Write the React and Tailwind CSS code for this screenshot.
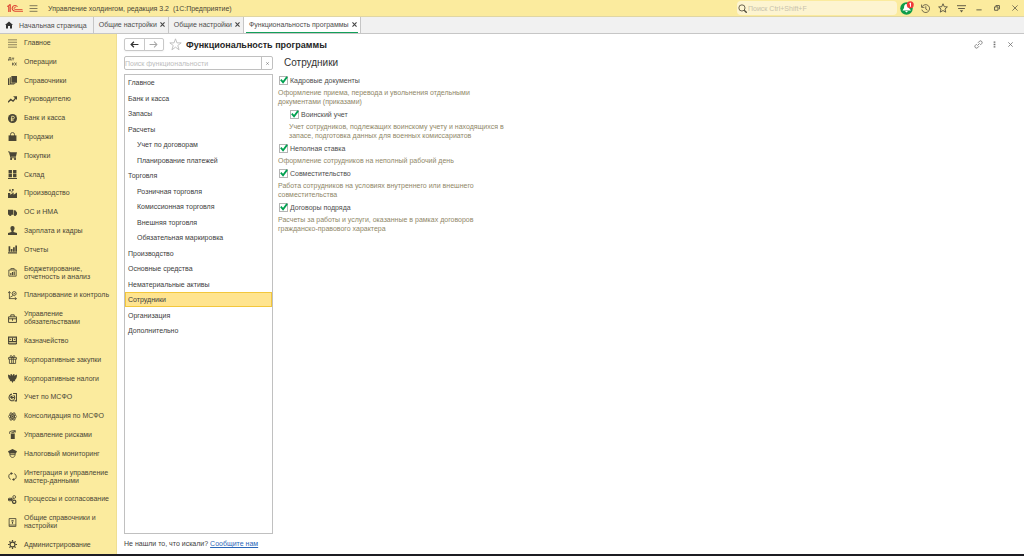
import React, { useState } from 'react';

const Icon = ({ children, className = 'w-[10px] h-[10px]' }) => (
  <svg
    viewBox="0 0 16 16"
    className={`${className} shrink-0`}
    fill="none"
    stroke="currentColor"
    strokeWidth="1.5"
    aria-hidden="true"
  >
    {children}
  </svg>
);

// filled and stroked parts of the section icons
const F = (props) => <path fill="currentColor" stroke="none" {...props} />;
const S = (props) => <path {...props} />;

const icons = {
  lines: <S strokeWidth="1.1" d="M0 1.500h16M0 5.800h16M0 10.200h16M0 14.500h16" />,
  operations: (
    <S strokeWidth="1.3" d="M1 6V5l1-1V1h3v4M0 6V5h6v1M7 2h4M9 2v4M8 10v5M11 10l-2.500 2.500L11 15M12 10l3 5M15 10l-3 5" />
  ),
  books: (
    <>
      <F d="M6 0h10v12H6z" />
      <F d="M3 2h2v11h8v1H3z" />
      <F d="M0 4h2v11h9v1H0z" />
    </>
  ),
  trend: (
    <>
      <S strokeWidth="2.4" d="M0 13l5-5 4 3 5-6" />
      <F d="M9 2h7v7z" />
    </>
  ),
  ruble: (
    <>
      <circle cx="8" cy="8" r="8" fill="currentColor" stroke="none" />
      <S stroke="#fbeb9e" d="M6.500 13V4h2.500a2.300 2.300 0 0 1 0 4.700H5M5 11h5" />
    </>
  ),
  bag: (
    <>
      <F d="M1 6h14v10H1z" />
      <S d="M4.500 8V4a3.500 3 0 0 1 7 0v4" />
    </>
  ),
  cart: (
    <>
      <F d="M2 2h14l-2 8H4z" />
      <S d="M0 1.500h3l2 10.500H14" />
      <F d="M4 12h3v4H4zM11 12h3v4h-3z" />
    </>
  ),
  warehouse: <F d="M1 0h6v6H1zM9 0h6v6H9zM1 7h6v6H1zM9 7h6v6H9zM0 14h16v2H0z" />,
  factory: <F d="M0 16V7h4v3l6-4v4l6-4v10zM2 1h3v3H2zM7 0h3v3H7zM6 4h2v2H6z" />,
  truck: (
    <>
      <F d="M0 3h9v9H0zM10 4h3l3 4v4h-6z" />
      <circle cx="4" cy="12" r="2.300" fill="currentColor" stroke="none" />
      <circle cx="12.500" cy="12" r="2.300" fill="currentColor" stroke="none" />
    </>
  ),
  person: <F d="M8 0a3.700 3.700 0 0 1 3.700 4c0 2-1 4-2 5l.3 1.500 6 2V16H0v-3.500l6-2 .3-1.500c-1-1-2-3-2-5A3.700 3.700 0 0 1 8 0z" />,
  bars: <F d="M1 2h3v10H1zM5 7h3v5H5zM9 4h3v8H9zM13 1h3v11h-3zM0 13h16v2H0z" />,
  budget: (
    <>
      <S d="M1.500 3.500h13v11h-13zM5 3V1h6v2" />
      <F d="M4 9h2v4H4zM7 7h2v6H7zM10 6h2v7h-2z" />
    </>
  ),
  planning: (
    <>
      <S d="M2.500 1v13M0 4l2.500-3L5 4M2 13.500h13M12 11l3 2.500-3 2.500M4 11l5-3" />
      <circle cx="11" cy="4.500" r="3.500" />
      <S d="M9.500 4.500l1.200 1.200L13 3" />
    </>
  ),
  briefcase: <S strokeWidth="1.7" d="M1 5h14v10H1zM5 5V1.500h6V5M1 8.500h14M8 8v4" />,
  treasury: (
    <>
      <S d="M1 2h14v8H1zM1 14h14" strokeWidth="2" />
      <F d="M3 4l3 2-3 2zM13 4l-3 2 3 2zM7 3h2v6H7zM0 11h2v3H0zM14 11h2v3h-2z" />
    </>
  ),
  gift: <S d="M1 4.500h14v3H1zM2.500 7.500v7.500h11V7.500M6.500 4v11M9.500 4v11M8 4C5 4 3 3 4 1.500S8 2 8 4c0-2 3-4 4-2.500S11 4 8 4" />,
  eagle: (
    <F d="M8 3L6.500 0 4 1l1 2-5-2c0 5 1 9 4 9.500L3 13l3-.5L8 16l2-3.500 3 .5-1-2.500c3-.5 4-4.500 4-9.500l-5 2 1-2-2.500-1z" />
  ),
  ifrs: (
    <>
      <S strokeWidth="1.800" d="M7 2a6 6 0 1 0 4 11M9 1h6v13h-3M10 4a5 5 0 0 1 0 8" />
      <F d="M3 7l5-3v3h3v2H8v3z" />
    </>
  ),
  atom: (
    <>
      <ellipse cx="8" cy="8" rx="7.500" ry="3" />
      <ellipse cx="8" cy="8" rx="7.500" ry="3" transform="rotate(60 8 8)" />
      <ellipse cx="8" cy="8" rx="7.500" ry="3" transform="rotate(120 8 8)" />
      <circle cx="8" cy="8" r="1.800" fill="currentColor" stroke="none" />
    </>
  ),
  extinguisher: (
    <>
      <F d="M5 6h7v10H5zM6 3h5v2H6z" />
      <S d="M3 7V3l4-1.500h5M10 2l3-1v3z" />
    </>
  ),
  inspector: (
    <>
      <F d="M0 4l8-4 8 4-2 4H2z" />
      <S d="M3.500 7v3c0 3 2 5 4.500 5s4.500-2 4.500-5V7M3 10h10" />
    </>
  ),
  sync: (
    <>
      <S strokeWidth="1.600" d="M6 2.500C2 3 1 6 1.500 9c.3 2 1.500 3.500 3.500 4M10 13.500c4-.5 5-3.500 4.500-6.500-.3-2-1.500-3.500-3.500-4" />
      <F d="M5 0l4 2.500L5 5.500zM11 10.500v5.500l-4-2.500z" />
    </>
  ),
  process: (
    <>
      <circle cx="11" cy="3.500" r="2.500" />
      <circle cx="11" cy="12" r="3" strokeWidth="2.200" />
      <S strokeWidth="1.800" d="M0 8h6M3 5L0 8l3 3M7 8l3-2" />
      <F d="M4 5h3v6H4z" />
    </>
  ),
  cabinet: (
    <>
      <S d="M2 1h12v14H2zM2 12.500h12" />
      <F d="M6 4h4v2H6zM7 7h2v3H7z" />
    </>
  ),
  gear: (
    <>
      <circle cx="8" cy="8" r="4.300" strokeWidth="2" />
      <S strokeWidth="2.200" d="M8 0v3M8 13v3M0 8h3M13 8h3M2.500 2.500l2 2M11.500 11.500l2 2M13.500 2.500l-2 2M4.500 11.500l-2 2" />
    </>
  ),
};

const sections = [
  { icon: 'lines', title: 'Главное' },
  { icon: 'operations', title: 'Операции' },
  { icon: 'books', title: 'Справочники' },
  { icon: 'trend', title: 'Руководителю' },
  { icon: 'ruble', title: 'Банк и касса' },
  { icon: 'bag', title: 'Продажи' },
  { icon: 'cart', title: 'Покупки' },
  { icon: 'warehouse', title: 'Склад' },
  { icon: 'factory', title: 'Производство' },
  { icon: 'truck', title: 'ОС и НМА' },
  { icon: 'person', title: 'Зарплата и кадры' },
  { icon: 'bars', title: 'Отчеты' },
  { icon: 'budget', title: 'Бюджетирование, отчетность и анализ' },
  { icon: 'planning', title: 'Планирование и контроль' },
  { icon: 'briefcase', title: 'Управление обязательствами' },
  { icon: 'treasury', title: 'Казначейство' },
  { icon: 'gift', title: 'Корпоративные закупки' },
  { icon: 'eagle', title: 'Корпоративные налоги' },
  { icon: 'ifrs', title: 'Учет по МСФО' },
  { icon: 'atom', title: 'Консолидация по МСФО' },
  { icon: 'extinguisher', title: 'Управление рисками' },
  { icon: 'inspector', title: 'Налоговый мониторинг' },
  { icon: 'sync', title: 'Интеграция и управление мастер-данными' },
  { icon: 'process', title: 'Процессы и согласование' },
  { icon: 'cabinet', title: 'Общие справочники и настройки' },
  { icon: 'gear', title: 'Администрирование' },
];

const groups = [
  { title: 'Главное' },
  { title: 'Банк и касса' },
  { title: 'Запасы' },
  { title: 'Расчеты' },
  { title: 'Учет по договорам', nested: true },
  { title: 'Планирование платежей', nested: true },
  { title: 'Торговля' },
  { title: 'Розничная торговля', nested: true },
  { title: 'Комиссионная торговля', nested: true },
  { title: 'Внешняя торговля', nested: true },
  { title: 'Обязательная маркировка', nested: true },
  { title: 'Производство' },
  { title: 'Основные средства' },
  { title: 'Нематериальные активы' },
  { title: 'Сотрудники' },
  { title: 'Организация' },
  { title: 'Дополнительно' },
];

const options = [
  {
    id: 'hr-docs',
    title: 'Кадровые документы',
    hint: 'Оформление приема, перевода и увольнения отдельными документами (приказами)',
  },
  {
    id: 'military',
    title: 'Воинский учет',
    hint: 'Учет сотрудников, подлежащих воинскому учету и находящихся в запасе, подготовка данных для военных комиссариатов',
    nested: true,
  },
  {
    id: 'part-time',
    title: 'Неполная ставка',
    hint: 'Оформление сотрудников на неполный рабочий день',
  },
  {
    id: 'second-job',
    title: 'Совместительство',
    hint: 'Работа сотрудников на условиях внутреннего или внешнего совместительства',
  },
  {
    id: 'contracts',
    title: 'Договоры подряда',
    hint: 'Расчеты за работы и услуги, оказанные в рамках договоров гражданско-правового характера',
  },
];

const Cross = ({ className = 'w-[5px] h-[5px]' }) => (
  <Icon className={className}>
    <path strokeWidth="3.500" d="M1.500 1.500l13 13M14.500 1.500l-13 13" />
  </Icon>
);

const Logo = () => (
  <svg viewBox="0 0 32 16" className="w-4 h-2 shrink-0" fill="none" stroke="#dd4433" strokeWidth="2.200" aria-label="1С">
    <path d="M0 4.500h2.500L5 1.500h1.500V16M3.500 5v11" />
    <path d="M21 5.500A5.800 5.800 0 1 0 16 14.500h16" />
    <path d="M18 6.500a2.500 2.500 0 1 0-2 4.500h15" strokeWidth="1.600" />
  </svg>
);

const TitleButton = ({ label, children }) => (
  <button type="button" aria-label={label} className="w-[18px] h-4 flex items-center justify-center">
    {children}
  </button>
);

const TitleBar = () => (
  <header className="h-4 flex items-center bg-[#fbeb9e] pl-[7px] shrink-0">
    <Logo />
    <button type="button" aria-label="Меню" className="ml-[6px] text-[#6b6650]">
      <Icon className="w-[9px] h-[9px]">
        <path d="M1 3h14M1 8h14M1 13h14" />
      </Icon>
    </button>
    <span className="ml-[10px] text-[7px] leading-[9px] text-[#4a4636] whitespace-pre">
      {'Управление холдингом, редакция 3.2  (1С:Предприятие)'}
    </span>
    <label className="ml-auto w-[160px] h-[14px] flex items-center rounded-sm bg-[#fdf4d0] px-px text-[#4f4a3a]">
      <Icon className="w-[9px] h-[9px]">
        <circle cx="7" cy="7" r="5.500" />
        <path strokeWidth="2.500" d="M11 11l4.500 4.500" />
      </Icon>
      <input
        type="text"
        aria-label="Поиск"
        placeholder="Поиск Ctrl+Shift+F"
        className="ml-px min-w-0 flex-1 bg-transparent text-[7px] leading-[9px] outline-none placeholder:text-[#c8c2ac]"
      />
    </label>
    <div className="ml-px flex items-center text-[#5c5743]">
      <TitleButton label="Уведомления">
        <svg viewBox="0 0 28 28" className="w-[14px] h-[14px]">
          <circle cx="13" cy="15" r="12.500" fill="#0f9d4a" />
          <path fill="#fff" d="M13 6c-4 0-5 4-5 8l-3 5h17l-4-5c0-4-1-8-5-8zM10 20h6l-3 3z" />
          <circle cx="20.500" cy="7.500" r="7" fill="#f0383a" />
          <path d="M18.500 6l2.500-2v7.500" fill="none" stroke="#fff" strokeWidth="2" />
        </svg>
      </TitleButton>
      <TitleButton label="История">
        <Icon className="w-[9px] h-[9px]">
          <path d="M2 5a7 7 0 1 1-.5 5M1 1v5h5M8.500 4v5l3 2" />
        </Icon>
      </TitleButton>
      <TitleButton label="Избранное">
        <Icon className="w-[10px] h-[10px]">
          <path d="M8 1.200l2 4.700 5 .4-3.800 3.300 1.200 5L8 12l-4.400 2.600 1.200-5L1 6.300l5-.4z" />
        </Icon>
      </TitleButton>
      <TitleButton label="Настройки">
        <Icon className="w-[9px] h-[9px]">
          <path strokeWidth="1.700" d="M0 3h16M2 8h12" />
          <path fill="currentColor" stroke="none" d="M5 11h6l-3 4z" />
        </Icon>
      </TitleButton>
      <TitleButton label="Свернуть">
        <Icon className="w-[6px] h-[6px]">
          <path strokeWidth="2.500" d="M1 13h14" />
        </Icon>
      </TitleButton>
      <TitleButton label="Восстановить">
        <Icon className="w-[6px] h-[6px]">
          <path strokeWidth="2.500" d="M1.500 5h9v9h-9zM5 4V1.500h9.500v9H12" />
        </Icon>
      </TitleButton>
      <TitleButton label="Закрыть">
        <Icon className="w-[6px] h-[6px]">
          <path strokeWidth="2" d="M1 1l14 14M15 1L1 15" />
        </Icon>
      </TitleButton>
    </div>
  </header>
);

const Tab = ({ title, active }) => (
  <div
    className={`flex items-center border-r border-[#c6c6c6] px-[2px] ${active ? 'bg-white' : ''}`}
  >
    <div
      className={`h-full flex items-center gap-[3px] pl-[3px] pr-px border-b-1 ${
        active ? 'border-[#12a05a]' : 'border-transparent'
      }`}
    >
      <a href="#" className="whitespace-nowrap">{title}</a>
      <button type="button" aria-label="Закрыть вкладку" className="text-[#444]">
        <Cross />
      </button>
    </div>
  </div>
);

const TabBar = () => (
  <nav className="h-[18px] flex shrink-0 bg-[#f1f1f1] border-y border-t-[#e0d6a4] border-b-[#c6c6c6] text-[7px] leading-[9px] text-[#4d4d4d]">
    <a href="#" className="flex items-center gap-[6px] pl-[5px] pr-[6px] border-r border-[#c6c6c6] whitespace-nowrap">
      <Icon className="w-2 h-2">
        <path fill="#333" stroke="none" d="M8 1l8 7h-2v7h-4v-5H6v5H2V8H0z" />
      </Icon>
      Начальная страница
    </a>
    <Tab title="Общие настройки" />
    <Tab title="Общие настройки" />
    <Tab title="Функциональность программы" active />
  </nav>
);

const Sidebar = () => (
  <aside className="w-[117px] shrink-0 bg-[#fbeb9e] border-r border-[#efdf92]">
    <ul className="h-full flex flex-col justify-between">
      {sections.map((section) => (
        <li key={section.title}>
          <a href="#" className="flex items-center py-[5px] pl-2 pr-1 text-[7px] leading-[8px] text-[#4a4636]">
            <Icon className="w-[9px] h-[9px] -my-px">{icons[section.icon]}</Icon>
            <span className="ml-[7px]">{section.title}</span>
          </a>
        </li>
      ))}
    </ul>
  </aside>
);

const PageHeader = () => (
  <div className="flex items-center h-[13px]">
    <div className="flex h-[13px] w-10 rounded-xs border border-[#c8c8c8] shadow-xs">
      <button type="button" aria-label="Назад" className="flex-1 flex items-center justify-center border-r border-[#c8c8c8] text-[#333]">
        <Icon className="w-[9px] h-[9px]">
          <path strokeWidth="2.200" d="M15 8H2M7 3L2 8l5 5" />
        </Icon>
      </button>
      <button type="button" aria-label="Вперед" className="flex-1 flex items-center justify-center text-[#a6a6a6]">
        <Icon className="w-[9px] h-[9px]">
          <path strokeWidth="1.800" d="M1 8h13M9 3l5 5-5 5" />
        </Icon>
      </button>
    </div>
    <button type="button" aria-label="В избранное" className="ml-[5px] text-[#b5b5b5]">
      <Icon className="w-[13px] h-[13px]">
        <path strokeWidth="1" d="M8 1l1.800 5H15l-4.200 3.200 1.600 5.300L8 11.300l-4.400 3.200 1.600-5.300L1 6h5.200z" />
      </Icon>
    </button>
    <h1 className="ml-1 text-[9px] leading-3 font-bold text-[#262626]">Функциональность программы</h1>
    <div className="ml-auto flex items-center text-[#6e6e6e]">
      <button type="button" aria-label="Ссылка" className="w-4 flex justify-center">
        <Icon className="w-[9px] h-[9px]">
          <path d="M6 10l4-4M7 5l3-3a2.900 2.900 0 0 1 4 4l-3 3M9 11l-3 3a2.900 2.900 0 0 1-4-4l3-3" />
        </Icon>
      </button>
      <button type="button" aria-label="Еще" className="w-4 flex justify-center">
        <Icon className="w-[7px] h-[7px]">
          <path fill="currentColor" stroke="none" d="M6 1h4v3H6zM6 6.500h4v3H6zM6 12h4v3H6z" />
        </Icon>
      </button>
      <button type="button" aria-label="Закрыть" className="w-4 flex justify-center">
        <Icon className="w-[5px] h-[5px]">
          <path strokeWidth="2.500" d="M1 1l14 14M15 1L1 15" />
        </Icon>
      </button>
    </div>
  </div>
);

const GroupList = ({ selected, onSelect }) => (
  <ul className="mt-1 flex-1 border border-[#c0c0c0] text-[7px] leading-[9px] text-[#404040]">
    {groups.map((group) => (
      <li key={group.title} className="h-[15px] even:h-4">
        <button
          type="button"
          onClick={() => onSelect(group.title)}
          className={`w-full h-full flex items-center border ${group.nested ? 'pl-[11px]' : 'pl-[2px]'} ${
            selected === group.title ? 'bg-[#ffe48f] border-[#f3c73c]' : 'border-transparent'
          }`}
        >
          {group.title}
        </button>
      </li>
    ))}
  </ul>
);

const Option = ({ option }) => (
  <div className={option.nested ? 'ml-[11px]' : ''}>
    <div className="flex items-center h-[9px]">
      <span className="relative w-[9px] h-[9px] ml-px">
        <input
          id={option.id}
          type="checkbox"
          defaultChecked
          className="peer block w-[9px] h-[9px] appearance-none border border-[#b4b4b4] bg-white"
        />
        <svg
          viewBox="0 0 20 20"
          className="absolute inset-0 w-[9px] h-[9px] pointer-events-none overflow-visible invisible peer-checked:visible"
          fill="none"
          stroke="#00a050"
          strokeWidth="4"
        >
          <path d="M4 8l5 6L18 2" />
        </svg>
      </span>
      <label htmlFor={option.id} className="ml-[2px] leading-[9px] text-[#4d4d4d]">
        {option.title}
      </label>
    </div>
    <p className="mt-[3px] leading-[9px] text-[#8f8768]">{option.hint}</p>
  </div>
);

const App = () => {
  const [selected, setSelected] = useState('Сотрудники');

  return (
    <div className="min-h-screen flex flex-col bg-white font-['Liberation_Sans',Arial,sans-serif] border-b-2 border-[#1c1c22]">
      <TitleBar />
      <TabBar />
      <div className="flex-1 flex">
        <Sidebar />
        <main className="flex-1 min-w-0 flex flex-col pt-1 pl-[7px] pr-[6px]">
          <PageHeader />
          <div className="mt-[5px] flex-1 flex">
            <div className="w-[149px] shrink-0 flex flex-col">
              <div className="flex h-[14px] rounded-xs border border-[#c0c0c0]">
                <input
                  type="text"
                  aria-label="Поиск функциональности"
                  placeholder="Поиск функциональности"
                  className="min-w-0 flex-1 text-[7px] leading-[9px] outline-none placeholder:text-[#bdbdbd]"
                />
                <button type="button" aria-label="Очистить" className="w-[11px] flex items-center justify-center border-l border-[#c0c0c0] text-[#777]">
                  <Cross className="w-[3px] h-[3px]" />
                </button>
              </div>
              <GroupList selected={selected} onSelect={setSelected} />
              <p className="py-[5px] text-[7px] leading-[10px] text-[#404040]">
                Не нашли то, что искали?{' '}
                <a href="#" className="text-[#2a66b8] underline">Сообщите нам</a>
              </p>
            </div>
            <section className="ml-[5px] max-w-[232px] text-[7px]">
              <h2 className="pl-[6px] text-[10px] leading-[14px] text-[#333]">{selected}</h2>
              <div className="mt-[6px] flex flex-col gap-1">
                {options.map((option) => (
                  <Option key={option.id} option={option} />
                ))}
              </div>
            </section>
          </div>
        </main>
      </div>
    </div>
  );
};

export default App;
